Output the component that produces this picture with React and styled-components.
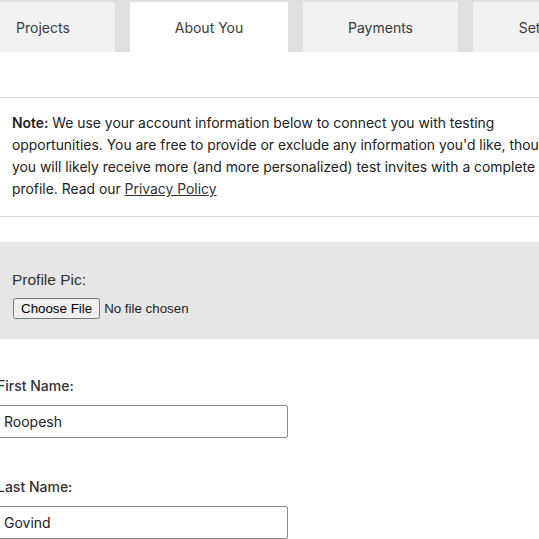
import React from 'react';
import styled, { createGlobalStyle } from 'styled-components';

const GlobalStyle = createGlobalStyle`
  body {
    margin: 0;
    background: #fff;
    font-family: Inter, "Noto Sans", sans-serif;
    overflow: hidden;
  }
`;

const tabs = [
  { label: 'Projects', width: 144 },
  { label: 'About You', width: 158, active: true },
  { label: 'Payments', width: 155 },
  { label: 'Settings', width: 145 },
];

export default function App() {
  return (
    <Page>
      <GlobalStyle />
      <TabBar>
        {tabs.map(t => (
          <Tab key={t.label} $width={t.width} $active={t.active}>{t.label}</Tab>
        ))}
      </TabBar>
      <Spacer $h={45} />
      <Divider />
      <Note>
        <strong>Note:</strong> We use your account information below to connect you with testing<br />
        opportunities. You are free to provide or exclude any information you'd like, though<br />
        you will likely receive more (and more personalized) test invites with a complete<br />
        profile. Read our <a href="#">Privacy Policy</a>
      </Note>
      <Divider />
      <Spacer $h={25} />
      <PicBox>
        <PicLabel>Profile Pic:</PicLabel>
        <input type="file" />
      </PicBox>
      <Fields>
        <Field>
          <FieldLabel>First Name:</FieldLabel>
          <TextInput defaultValue="Roopesh" />
        </Field>
        <Field>
          <FieldLabel>Last Name:</FieldLabel>
          <TextInput defaultValue="Govind" />
        </Field>
      </Fields>
    </Page>
  );
}

const Page = styled.div`
  width: 539px;
  height: 539px;
  overflow: hidden;
`;

const TabBar = styled.div`
  display: flex;
  gap: 15px;
  background: #e0e0e0;
  padding-top: 2px;
  margin-left: -29px;
  width: 700px;
`;

const Tab = styled.div`
  flex: 0 0 ${props => props.$width}px;
  height: 50px;
  display: flex;
  align-items: center;
  justify-content: center;
  background: ${props => props.$active ? '#fff' : '#f1f1f1'};
  color: #3a3a3a;
  font-size: 14px;
`;

const Spacer = styled.div`
  height: ${props => props.$h}px;
`;

const Divider = styled.div`
  height: 1px;
  background: #dedede;
  width: 100%;
`;

const Note = styled.p`
  margin: 0;
  padding: 14px 0 16px 12px;
  width: 620px;
  white-space: nowrap;
  font-size: 13.9px;
  line-height: 22px;
  color: #222;

  strong {
    font-weight: 600;
  }

  a {
    color: #333;
    text-decoration: underline;
  }
`;

const PicBox = styled.div`
  background: #e6e6e6;
  height: 97px;
  box-sizing: border-box;
  padding: 29px 0 0 13px;
  display: flex;
  flex-direction: column;
  align-items: flex-start;
  gap: 9px;

  input {
    font-family: "Liberation Sans", Arial, sans-serif;
    font-size: 13.33px;
    color: #222;
  }
`;

const PicLabel = styled.div`
  font-family: "Liberation Sans", Arial, sans-serif;
  font-size: 15.5px;
  line-height: 18px;
  color: #333;
  margin-left: -1px;
`;

const Fields = styled.div`
  display: flex;
  flex-direction: column;
  gap: 39px;
  padding-top: 37px;
  margin-left: -3px;
`;

const Field = styled.div`
  display: flex;
  flex-direction: column;
  gap: 9px;
`;

const FieldLabel = styled.label`
  font-size: 14px;
  line-height: 20px;
  font-weight: 500;
  color: #333;
`;

const TextInput = styled.input`
  width: 291px;
  height: 33px;
  box-sizing: border-box;
  padding: 0 6px;
  border: 1px solid #8a8a8a;
  border-radius: 2px;
  font-family: Inter, "Noto Sans", sans-serif;
  font-size: 14px;
  color: #222;
  outline: none;
`;
